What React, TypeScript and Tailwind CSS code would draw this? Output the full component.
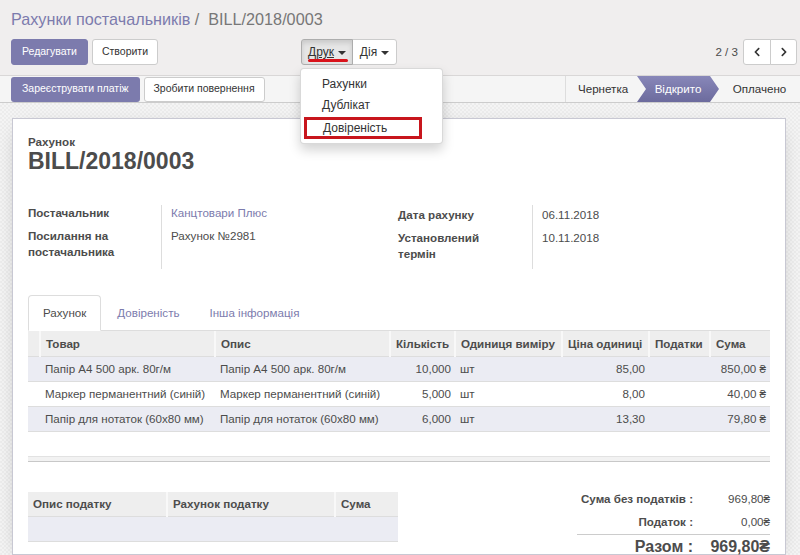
import React from 'react';
import { FaChevronLeft, FaChevronRight } from 'react-icons/fa';

const LINES = [
  { product: 'Папір А4 500 арк. 80г/м', qty: '10,000', price: '85,00', total: '850,00 ₴' },
  { product: 'Маркер перманентний (синій)', qty: '5,000', price: '8,00', total: '40,00 ₴' },
  { product: 'Папір для нотаток (60x80 мм)', qty: '6,000', price: '13,30', total: '79,80 ₴' },
];

const Caret = () => (
  <span className="inline-block w-0 h-0 ml-[4px] border-x-[4px] border-x-transparent border-t-[4px] border-t-current align-middle" />
);

const App: React.FC = () => {
  return (
    <div className="w-[800px] h-[555px] overflow-hidden bg-[#f0eeee] text-[11.6px] text-[#4c4c4c] font-['Liberation_Sans',Arial,sans-serif]">
      {/* control panel */}
      <div className="h-[76px] border-b border-[#d9d7d7] pt-[8px]">
        <div className="pl-[11px] text-[16.2px] leading-[22px] text-[#777]">
          <span className="text-[#7c7bad]">Рахунки постачальників</span> /&nbsp; BILL/2018/0003
        </div>
        <div className="mt-[9px] flex items-center pl-[11px] pr-[3px]">
          <div className="w-[386px] flex items-center justify-between">
            <div className="flex gap-[4px] text-[10.5px]">
              <button className="h-[26px] px-[10px] rounded-[3px] bg-[#7c7bad] text-white border border-[#7c7bad]">Редагувати</button>
              <button className="h-[26px] px-[9px] rounded-[3px] bg-white border border-[#ccc] text-[#333]">Створити</button>
            </div>
            <div className="relative flex text-[12px]">
              <button className="relative h-[26px] w-[52px] rounded-l-[3px] bg-[#e6e6e6] border border-[#adadad] shadow-[inset_0_3px_5px_rgba(0,0,0,0.125)] text-[#333]">
                <span className="underline">Друк</span>
                <Caret />
                <span className="absolute left-[6px] top-[19px] w-[40px] h-[3px] rounded-full bg-[#d9131b]" />
              </button>
              <button className="h-[26px] w-[45px] -ml-px rounded-r-[3px] bg-white border border-[#ccc] text-[#333]">
                Дія<Caret />
              </button>
              <div className="absolute z-10 left-[-1px] top-[29px] w-[143px] pt-[5px] pb-[4px] bg-white border border-black/15 rounded-[4px] shadow-[0_6px_12px_rgba(0,0,0,0.175)] text-[#333]">
                <div className="px-[21px] leading-[21px]">Рахунки</div>
                <div className="px-[21px] leading-[21px]">Дублікат</div>
                <div className="mt-[1px] ml-[3px] w-[118px] h-[22px] pl-[16px] border-[3px] border-[#c8161d] leading-[16px]">Довіреність</div>
              </div>
            </div>
          </div>
          <div className="flex-1 flex items-center justify-end">
            <span className="mr-[5px] text-[#4c4c4c]">2 / 3</span>
            <button className="h-[26px] w-[28px] flex items-center justify-center bg-white border border-[#ccc] rounded-l-[3px] text-[#333]">
              <FaChevronLeft size={10} />
            </button>
            <button className="h-[26px] w-[27px] -ml-px flex items-center justify-center bg-white border border-[#ccc] rounded-r-[3px] text-[#333]">
              <FaChevronRight size={10} />
            </button>
          </div>
        </div>
      </div>

      {/* status bar */}
      <div className="h-[27px] flex items-center justify-between pl-[11px] bg-[#f5f5f5] border-b border-[#ccc]">
        <div className="flex gap-[4px] text-[10.5px]">
          <button className="h-[25px] px-[11px] rounded-[3px] bg-[#7c7bad] text-white">Зареєструвати платіж</button>
          <button className="h-[25px] px-[9px] rounded-[3px] bg-white border border-[#ccc] text-[#333]">Зробити повернення</button>
        </div>
        <div className="flex h-[26px] self-start text-[#333]">
          <div className="w-[73px] pl-[12px] flex items-center border-l border-[#ddd]">Чернетка</div>
          <div className="w-[82px] -ml-[1px] flex items-center justify-center text-white bg-gradient-to-b from-[#8887b9] to-[#6c6b9d] [clip-path:polygon(0_0,calc(100%_-_9px)_0,100%_50%,calc(100%_-_9px)_100%,0_100%,9px_50%)]">
            Відкрито
          </div>
          <div className="w-[81px] flex items-center justify-center">Оплачено</div>
        </div>
      </div>

      {/* sheet background */}
      <div className="h-[452px] pt-[15px] pl-[12px] pr-[14px] bg-[repeating-conic-gradient(#ececec_0_25%,#f4f4f4_0_50%)] bg-[length:4px_4px]">
        <div className="h-full bg-white border border-[#c8c8d3] shadow-[0_5px_20px_-10px_rgba(0,0,0,0.4)] px-[15px] pt-[16px]">
          <div className="font-bold leading-[14px]">Рахунок</div>
          <div className="-mt-[2px] text-[23px] leading-[28px] font-bold text-[#4c4c4c]">BILL/2018/0003</div>

          {/* fields */}
          <div className="mt-[30px] flex">
            <div className="w-[370px] flex">
              <div className="w-[134px] border-r border-[#ddd] font-bold leading-[16px]">
                <div className="h-[23px]">Постачальник</div>
                <div>Посилання на<br />постачальника</div>
              </div>
              <div className="pl-[9px] leading-[16px]">
                <div className="h-[23px] text-[#7c7bad]">Канцтовари Плюс</div>
                <div>Рахунок №2981</div>
              </div>
            </div>
            <div className="flex">
              <div className="w-[135px] border-r border-[#ddd] font-bold leading-[16px] pt-[2px] pb-[7px]">
                <div className="h-[23px]">Дата рахунку</div>
                <div>Установлений<br />термін</div>
              </div>
              <div className="pl-[9px] pt-[2px] leading-[16px]">
                <div className="h-[23px]">06.11.2018</div>
                <div>10.11.2018</div>
              </div>
            </div>
          </div>

          {/* tabs */}
          <div className="mt-[26px] flex border-b border-[#ddd]">
            <div className="-mb-px h-[36px] px-[14px] flex items-center bg-white border border-[#ddd] border-b-white rounded-t-[4px]">Рахунок</div>
            <div className="h-[35px] px-[16px] flex items-center text-[#7c7bad]">Довіреність</div>
            <div className="h-[35px] px-[14px] flex items-center text-[#7c7bad]">Інша інформація</div>
          </div>

          <table className="w-[742px] table-fixed border-collapse whitespace-nowrap">
            <colgroup>
              <col className="w-[12px]" />
              <col className="w-[175px]" />
              <col className="w-[175px]" />
              <col className="w-[65px]" />
              <col className="w-[107px]" />
              <col className="w-[87px]" />
              <col className="w-[61px]" />
              <col className="w-[60px]" />
            </colgroup>
            <thead>
              <tr className="h-[25px] bg-[#eee] border-b border-[#ddd] font-bold text-left">
                <th className="p-0"></th>
                <th className="px-[5px] border-l-2 border-[#f8f8f8]">Товар</th>
                <th className="px-[5px] border-l-2 border-[#f8f8f8]">Опис</th>
                <th className="px-[5px] border-l-2 border-[#f8f8f8]">Кількість</th>
                <th className="px-[5px] border-l-2 border-[#f8f8f8]">Одиниця виміру</th>
                <th className="px-[5px] border-l-2 border-[#f8f8f8]">Ціна одиниці</th>
                <th className="px-[5px] border-l-2 border-[#f8f8f8]">Податки</th>
                <th className="px-[5px] border-l-2 border-[#f8f8f8]">Сума</th>
              </tr>
            </thead>
            <tbody>
              {LINES.map((l, i) => (
                <tr key={l.product} className={`h-[25px] border-b border-[#ddd] ${i % 2 === 0 ? 'bg-[#ebecf3]' : 'bg-white'}`}>
                  <td></td>
                  <td className="px-[5px]">{l.product}</td>
                  <td className="px-[5px]">{l.product}</td>
                  <td className="px-[4px] text-right">{l.qty}</td>
                  <td className="px-[5px]">шт</td>
                  <td className="px-[4px] text-right">{l.price}</td>
                  <td></td>
                  <td className="px-[4px] text-right">{l.total}</td>
                </tr>
              ))}
            </tbody>
          </table>

          <div className="mt-[24px] h-[6px] border-t border-[#e2e2e2] bg-[#f2f2f2] border-b border-b-[#c8c8c8]" />

          {/* taxes and totals */}
          <div className="flex justify-between">
            <table className="mt-[30px] w-[370px] table-fixed border-collapse self-start whitespace-nowrap">
              <colgroup>
                <col className="w-[139px]" />
                <col className="w-[168px]" />
                <col className="w-[63px]" />
              </colgroup>
              <thead>
                <tr className="h-[25px] bg-[#eee] border-b border-[#ddd] font-bold text-left">
                  <th className="px-[5px]">Опис податку</th>
                  <th className="px-[5px] border-l-2 border-[#f8f8f8]">Рахунок податку</th>
                  <th className="px-[5px] border-l-2 border-[#f8f8f8]">Сума</th>
                </tr>
              </thead>
              <tbody>
                <tr className="h-[25px] bg-[#ebecf3] border-b border-[#ddd]">
                  <td></td>
                  <td></td>
                  <td></td>
                </tr>
              </tbody>
            </table>

            <div className="mt-[26px] w-[193px] whitespace-nowrap">
              <div className="h-[23px] flex items-center">
                <div className="w-[124px] pr-[8px] text-right font-bold">Сума без податків :</div>
                <div className="flex-1 text-right">969,80₴</div>
              </div>
              <div className="h-[23px] flex items-center">
                <div className="w-[124px] pr-[8px] text-right font-bold">Податок :</div>
                <div className="flex-1 text-right">0,00₴</div>
              </div>
              <div className="border-t border-[#ccc] h-[25px] flex items-center text-[16px] font-bold">
                <div className="w-[124px] pr-[8px] text-right">Разом :</div>
                <div className="flex-1 text-right">969,80₴</div>
              </div>
            </div>
          </div>
        </div>
      </div>
    </div>
  );
};

export default App;
